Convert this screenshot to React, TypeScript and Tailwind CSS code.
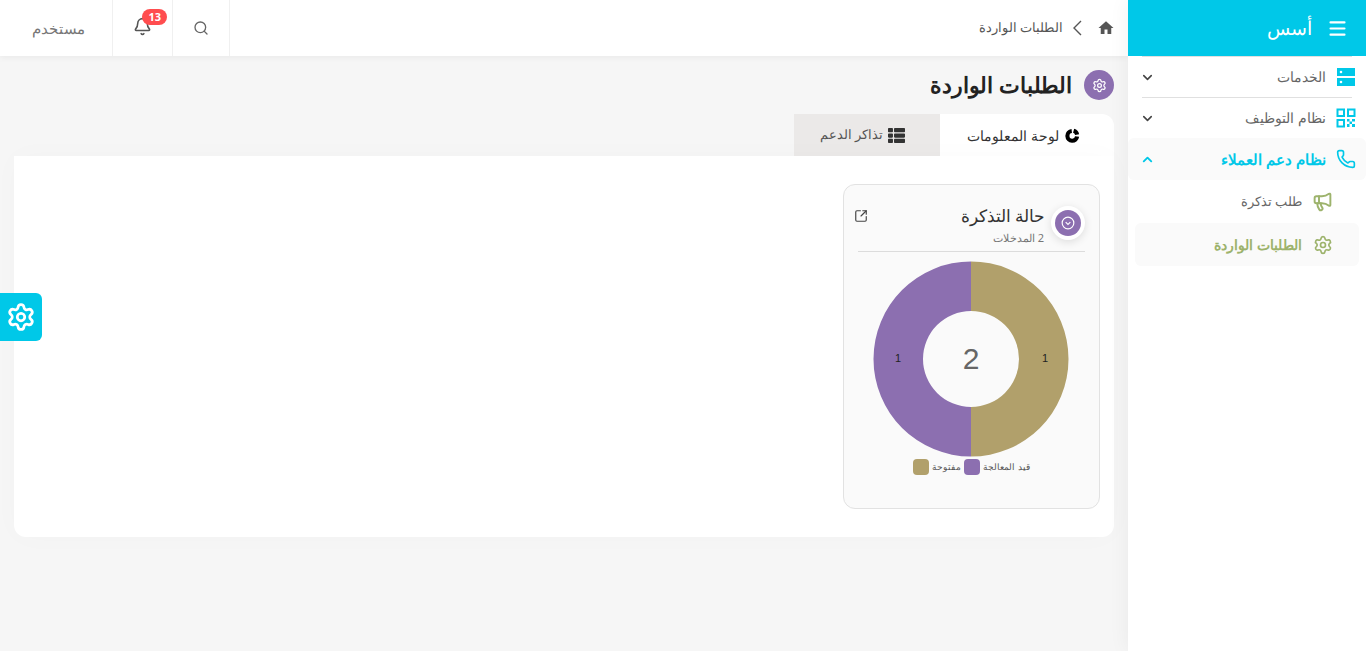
import { Bell, ChevronDown, ChevronUp, Megaphone, Menu, Phone, Search, Settings, SquareArrowOutUpRight } from "lucide-react";
import { FaThList } from "react-icons/fa";
import { MdHome } from "react-icons/md";

const ServerIcon = () => (
  <svg width="20" height="20" viewBox="0 0 20 20" fill="#00c8e8">
    <path fillRule="evenodd" d="M1 1h18v8H1zM5 3.7a1.3 1.3 0 1 0 0 2.6 1.3 1.3 0 0 0 0-2.6zM1 11h18v8H1zM5 13.7a1.3 1.3 0 1 0 0 2.6 1.3 1.3 0 0 0 0-2.6z" />
  </svg>
);

const QrIcon = () => (
  <svg width="20" height="20" viewBox="0 0 20 20" fill="none" stroke="#00c8e8" strokeWidth="2">
    <rect x="1.5" y="1.5" width="6.5" height="6.5" />
    <rect x="12" y="1.5" width="6.5" height="6.5" />
    <rect x="1.5" y="12" width="6.5" height="6.5" />
    <path d="M11 11h2.5v2.5H11zM16 11h3v2.5h-3zM13.5 13.5H16V16h-2.5zM11 16h2.5v3H11zM16 16h3v3h-3z" fill="#00c8e8" stroke="none" />
  </svg>
);

const DonutIcon = () => (
  <svg width="15" height="15" viewBox="0 0 16 16" fill="none" stroke="#000" strokeWidth="4.4">
    <path d="M7.2 3.2A5.2 5.2 0 1 0 12.9 9" />
    <path d="M9.2 2.9a5.2 5.2 0 0 1 3.7 4.1" />
  </svg>
);

function NavRow({ icon, label, open, active, divider }: { icon: React.ReactNode; label: string; open?: boolean; active?: boolean; divider?: boolean }) {
  return (
    <div className={`flex items-center rounded-md px-[14px] ${active ? "h-[42px] bg-[#fafafa] font-bold text-[#00c8e8]" : "h-[41px] text-[#666]"}`}>
      <div className={`flex h-full flex-1 items-center ${divider ? "border-t border-[#e0e0e0]" : ""}`}>
        <span className="ml-[9px] -mr-[5px] flex w-[22px] justify-center">{icon}</span>
        <span className={`flex-1 ${active ? "text-[15px]" : "text-[13.5px]"}`}>{label}</span>
        {open ? <ChevronUp size={15} strokeWidth={3} className="-ml-[2px]" /> : <ChevronDown size={15} strokeWidth={2.5} className="-ml-[2px] text-[#444]" />}
      </div>
    </div>
  );
}

function Donut() {
  return (
    <svg width="196" height="196" viewBox="0 0 196 196" className="block">
      <path d="M98 .5a97.5 97.5 0 0 1 0 195V146a48 48 0 0 0 0-96z" fill="#b1a06b" />
      <path d="M98 .5a97.5 97.5 0 0 0 0 195V146a48 48 0 0 1 0-96z" fill="#8c6fb0" />
      <text x="98" y="108" textAnchor="middle" fontSize="30" fill="#666" fontFamily="Liberation Sans">2</text>
      <text x="172" y="101" textAnchor="middle" fontSize="11" fill="#222" fontFamily="Liberation Sans">1</text>
      <text x="25" y="101" textAnchor="middle" fontSize="11" fill="#222" fontFamily="Liberation Sans">1</text>
    </svg>
  );
}

export default function App() {
  return (
    <div dir="rtl" className="relative flex h-[651px] overflow-hidden bg-[#f6f6f6] font-['Noto_Sans','Liberation_Sans',sans-serif]">
      <aside className="z-20 w-[238px] shrink-0 bg-white shadow-[0_0_20px_rgba(0,0,0,0.06)]">
        <div className="flex h-[56px] items-center gap-[15px] bg-[#00c8e8] px-[18px] text-[19px] text-white">
          <Menu size={21} strokeWidth={2.4} />
          <span>أسس</span>
        </div>
        <nav>
          <NavRow icon={<ServerIcon />} label="الخدمات" divider />
          <NavRow icon={<QrIcon />} label="نظام التوظيف" divider />
          <NavRow icon={<Phone size={20} />} label="نظام دعم العملاء" open active />
          <div className="flex h-[43px] items-center gap-[10px] pr-[33px] text-[13px] text-[#666]">
            <Megaphone size={21} strokeWidth={2.2} className="text-[#9db36c]" />
            <span>طلب تذكرة</span>
          </div>
          <div className="mx-[7px] flex h-[43px] items-center gap-[11px] rounded-md bg-[#fafafa] pr-[26px] text-[14.2px] font-bold text-[#9db36c]">
            <Settings size={20} />
            <span>الطلبات الواردة</span>
          </div>
        </nav>
      </aside>

      <div className="flex min-w-0 flex-1 flex-col">
        <header className="flex h-[56px] items-center bg-white shadow-[0_2px_6px_rgba(0,0,0,0.05)]">
          <div className="flex flex-1 items-center pr-[14px] text-[13px] text-[#555]">
            <MdHome size={18} className="-mr-[1px] text-[#555]" />
            <svg width="10" height="16" viewBox="0 0 10 16" fill="none" stroke="#555" strokeWidth="1.4" className="mr-[15px] ml-[9px]">
              <path d="M9 1 2 8l7 7" />
            </svg>
            <span>الطلبات الواردة</span>
          </div>
          <div className="flex h-full w-[58px] items-center justify-center border-x border-[#f0f0f0] pr-[1px]">
            <Search size={16} className="text-[#666]" />
          </div>
          <div className="relative flex h-full w-[59px] items-center justify-center">
            <Bell size={19} className="mb-[3px] text-[#555]" />
            <span className="absolute right-[5px] top-[9px] rounded-full bg-[#ff4d4f] px-[6px] text-[11px] font-bold leading-[16px] text-white">13</span>
          </div>
          <div className="flex h-full w-[113px] items-center justify-center border-r border-[#f0f0f0] pl-[5px] text-[15px] text-[#777]">
            مستخدم
          </div>
        </header>

        <main className="flex flex-col px-[14px] pt-[14px]">
          <div className="flex h-[30px] items-center gap-[12px]">
            <span className="flex size-[30px] items-center justify-center rounded-full bg-[#8c6fb0] text-white">
              <Settings size={15} />
            </span>
            <h1 className="text-[21.5px] font-bold text-[#222]">الطلبات الواردة</h1>
          </div>
          <div className="mt-[14px] flex h-[42px]">
            <div className="flex w-[174px] items-center justify-center gap-[6px] rounded-tr-xl bg-white pr-[7px] text-[14px] text-[#333]">
              <DonutIcon />
              <span>لوحة المعلومات</span>
            </div>
            <div className="flex w-[146px] items-center justify-center gap-[5px] bg-[#ebe9e8] pr-[9px] text-[13px] text-[#555]">
              <FaThList size={17} className="text-[#333]" />
              <span>تذاكر الدعم</span>
            </div>
          </div>
          <section className="h-[381px] rounded-b-xl bg-white px-[14px] pt-[28px] shadow-[0_0_30px_rgba(0,0,0,0.02)]">
            <div className="relative h-[325px] w-[257px] rounded-xl border border-[#e2e2e2] bg-[#fafafa] px-[14px]">
              <span className="absolute right-[14px] top-[21px] flex size-[34px] items-center justify-center rounded-full bg-white shadow-[0_2px_8px_rgba(0,0,0,0.12)]">
                <span className="flex size-[26px] items-center justify-center rounded-full bg-[#8c6fb0] text-white">
                  <svg width="14" height="14" viewBox="0 0 24 24" fill="none" stroke="currentColor" strokeWidth="2">
                    <circle cx="12" cy="12" r="10" />
                    <path d="m8 10.5 4 4 4-4" />
                  </svg>
                </span>
              </span>
              <div className="flex h-[67px] flex-col border-b border-[#dcdcdc] pr-[40px] pt-[20px]">
                <div className="flex items-center justify-between">
                  <span className="text-[16.5px] leading-[22px] text-[#333]">حالة التذكرة</span>
                  <SquareArrowOutUpRight size={14} className="-ml-[4px] text-[#444]" />
                </div>
                <span className="mr-[1px] mt-[4px] text-[11px] leading-[14px] text-[#777]">2 المدخلات</span>
              </div>
              <div className="mt-[9px] flex justify-center pr-[2px]">
                <Donut />
              </div>
              <div className="mt-[2px] flex items-center justify-center gap-[3px] text-[9px] text-[#555]">
                <span>قيد المعالجة</span>
                <span className="size-[16px] rounded-[4px] bg-[#8c6fb0]" />
                <span>مفتوحة</span>
                <span className="size-[16px] rounded-[4px] bg-[#b1a06b]" />
              </div>
            </div>
          </section>
        </main>
      </div>

      <div className="absolute left-0 top-[293px] z-30 flex h-[48px] w-[42px] items-center justify-center rounded-r-md bg-[#00c8e8] text-white">
        <Settings size={30} strokeWidth={2.2} />
      </div>
    </div>
  );
}
